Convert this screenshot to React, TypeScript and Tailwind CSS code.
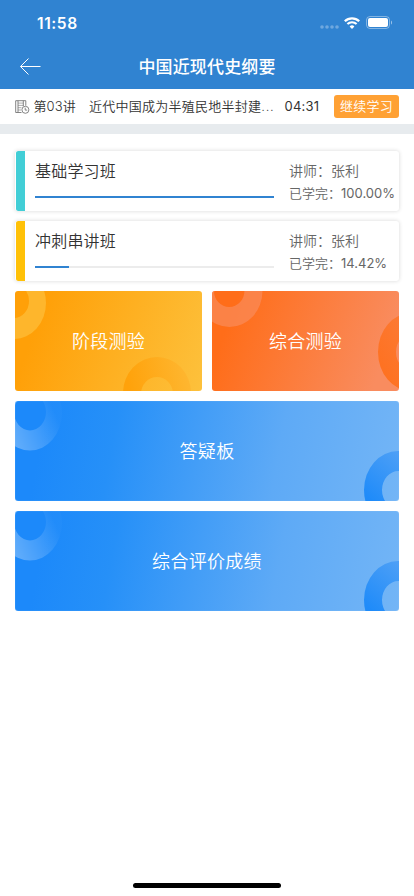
import type { ReactNode } from 'react';

type Course = {
  name: string;
  teacher: string;
  progress: number;
  accent: string;
};

const courses: Course[] = [
  { name: '基础学习班', teacher: '张利', progress: 100, accent: 'bg-[#42ced6]' },
  { name: '冲刺串讲班', teacher: '张利', progress: 14.42, accent: 'bg-[#ffc107]' },
];

function StatusBar() {
  return (
    <div className="flex h-[45px] items-center justify-between pt-[2px] pr-[21px] pl-[37px]">
      <span className="font-['Inter'] text-[15.5px] font-semibold tracking-[0.6px]">
        11:58
      </span>
      <div className="flex items-center">
        <svg width="19" height="4" viewBox="0 0 19 4" className="mt-[7px]" fill="#fff" opacity="0.3">
          <circle cx="2" cy="2" r="1.8" />
          <circle cx="7" cy="2" r="1.8" />
          <circle cx="12" cy="2" r="1.8" />
          <circle cx="17" cy="2" r="1.8" />
        </svg>
        <svg width="16" height="12" viewBox="0 0 16 12" className="-mt-[2px] ml-[5px]" fill="none" stroke="#fff">
          <path d="M.8 4.3a10.2 10.2 0 0 1 14.4 0" strokeWidth="2.3" />
          <path d="M3.4 7.1a6.5 6.5 0 0 1 9.2 0" strokeWidth="2.1" />
          <path d="M5.6 9.4a3.4 3.4 0 0 1 4.8 0L8 11.9z" fill="#fff" stroke="none" />
        </svg>
        <svg width="27" height="13" viewBox="0 0 27 13" className="-mt-[2px] ml-[6px]">
          <rect x=".5" y=".5" width="23" height="12" rx="3.5" fill="none" stroke="#fff" strokeOpacity="0.4" />
          <rect x="2" y="2" width="20" height="9" rx="2" fill="#fff" />
          <path d="M25 4.4c1.4.6 1.4 3.6 0 4.2z" fill="#fff" fillOpacity="0.5" />
        </svg>
      </div>
    </div>
  );
}

function Header() {
  return (
    <header className="h-[89px] bg-[#3083d1] text-white">
      <StatusBar />
      <div className="grid h-11 grid-cols-[1fr_auto_1fr] items-center">
        <svg
          width="22"
          height="18"
          viewBox="0 0 22 18"
          className="ml-[19px]"
          fill="none"
          stroke="currentColor"
          strokeWidth="1"
        >
          <path d="M9.5.5l-8 8 8 8M1.5 8.5h20" />
        </svg>
        <h1 className="text-[17px] leading-6 font-medium tracking-[0.15px]">中国近现代史纲要</h1>
      </div>
    </header>
  );
}

function LessonIcon() {
  return (
    <svg width="15" height="14" viewBox="0 0 15 14" fill="none" stroke="#777" strokeWidth="0.9">
      <path d="M6.5 12.5H.7V.7h10.1v5" />
      <path d="M3 .7v11.8M8.3 .7v5.6" />
      <path d="M3 3.1h5.3M3 5.4h5.3M3 7.7h3.5M3 10h3" strokeWidth="0.6" />
      <circle cx="10.4" cy="9.8" r="3.5" fill="#fff" />
      <path d="M10.2 7.7v2.4h2" />
    </svg>
  );
}

function LessonBar() {
  return (
    <div className="flex h-[45px] items-center border-b-10 border-[#e7ebee] px-[15px] text-[13px] text-[#333]">
      <LessonIcon />
      <span className="ml-[3.5px] w-[55.5px] tracking-[0.1px]">第03讲</span>
      <span className="w-[195.5px] tracking-[0.25px] whitespace-nowrap">
        近代中国成为半殖民地半封建<span className="font-['Inter'] tracking-[0.7px]">...</span>
      </span>
      <span className="font-['Inter'] text-[13px] font-normal tracking-[0.2px]">04:31</span>
      <button className="ml-auto h-[23px] w-[65px] rounded-[3px] bg-[#ffa134] tracking-[0.2px] text-white">
        继续学习
      </button>
    </div>
  );
}

function CourseCard({ course }: { course: Course }) {
  return (
    <div className="flex h-[60px] overflow-hidden rounded-[3px] bg-white shadow-[0_0_4px_rgba(0,0,0,0.16)]">
      <div className={`ml-px w-[9px] rounded-l-[2px] ${course.accent}`} />
      <div className="ml-[10px] w-[239px]">
        <h2 className="mt-[8px] text-[16px] leading-6 tracking-[0.2px] text-[#333]">{course.name}</h2>
        <div className="mt-[13px] h-[2px] bg-[#ececec]">
          <div className="h-full bg-[#3083d1]" style={{ width: `${course.progress}%` }} />
        </div>
      </div>
      <div className="ml-[15px] whitespace-nowrap text-[#666]">
        <p className="mt-[9px] text-[14px] leading-[22px]">讲师：{course.teacher}</p>
        <p className="text-[13px] leading-[22px]">
          已学完：
          <span className="font-['Inter'] font-normal">{course.progress.toFixed(2)}%</span>
        </p>
      </div>
    </div>
  );
}

type TileProps = {
  label: string;
  className: string;
  children: ReactNode;
};

function Tile({ label, className, children }: TileProps) {
  return (
    <button
      className={`relative flex h-[100px] items-center justify-center overflow-hidden rounded-[3px] text-[18px] tracking-[0.3px] text-white ${className}`}
    >
      <svg className="absolute inset-0 h-full w-full">{children}</svg>
      <span className="relative">{label}</span>
    </button>
  );
}

function BlueTile({ id, label }: { id: string; label: string }) {
  return (
    <Tile
      label={label}
      className="bg-linear-[100deg,#1c89fa_8%,#2690f8_26%,#5eaaf6_68%,#73b5f6_100%] shadow-[inset_0_0_1px_rgba(180,220,255,0.8)]"
    >
      <defs>
        <linearGradient id={`${id}-light`} gradientUnits="userSpaceOnUse" x1="0" y1="40" x2="44" y2="22">
          <stop offset="0" stopColor="#fff" stopOpacity="0.3" />
          <stop offset="0.5" stopColor="#fff" stopOpacity="0.17" />
          <stop offset="1" stopColor="#fff" stopOpacity="0.02" />
        </linearGradient>
        <linearGradient id={`${id}-dark`} gradientUnits="userSpaceOnUse" x1="350" y1="94" x2="384" y2="54">
          <stop offset="0" stopColor="#1f8bf9" />
          <stop offset="1" stopColor="#4c9ff6" />
        </linearGradient>
      </defs>
      <path
        fill={`url(#${id}-light)`}
        fillRule="evenodd"
        d="M-17 12a32 37.5 0 1 0 64 0a32 37.5 0 1 0-64 0zM-1 11a16 18.5 0 1 0 32 0a16 18.5 0 1 0-32 0z"
      />
      <path
        fill={`url(#${id}-dark)`}
        fillRule="evenodd"
        d="M349 89a34 39 0 1 0 68 0a34 39 0 1 0-68 0zM367 89a16.5 19 0 1 0 33 0a16.5 19 0 1 0-33 0z"
      />
    </Tile>
  );
}

export default function App() {
  return (
    <div className="flex h-[896px] w-[414px] flex-col overflow-hidden bg-white font-['Inter','Noto_Sans_CJK_SC',sans-serif] [font-weight:350]">
      <Header />
      <LessonBar />

      <main className="flex flex-1 flex-col gap-[10px] px-[15px] pt-[17px]">
        {courses.map((course) => (
          <CourseCard key={course.name} course={course} />
        ))}

        <div className="grid grid-cols-2 gap-[10px]">
          <Tile label="阶段测验" className="bg-linear-[110deg,#ffa008_15%,#fdc13c_100%]">
            <defs>
              <linearGradient id="stage-dark" x1="0" y1="0.5" x2="1" y2="0.3">
                <stop offset="0.1" stopColor="#ffa20b" />
                <stop offset="1" stopColor="#feb731" />
              </linearGradient>
            </defs>
            <path
              fill="#fdbf3c"
              fillOpacity="0.7"
              fillRule="evenodd"
              d="M-33 12a32 36 0 1 0 64 0a32 36 0 1 0-64 0zM-16 10a15 17 0 1 0 30 0a15 17 0 1 0-30 0z"
            />
            <path
              fill="url(#stage-dark)"
              fillRule="evenodd"
              d="M108 102a34 36 0 1 0 68 0a34 36 0 1 0-68 0zM126 103a16 17 0 1 0 32 0a16 17 0 1 0-32 0z"
            />
          </Tile>

          <Tile label="综合测验" className="bg-linear-[110deg,#ff6d19_12%,#f98c5f_88%]">
            <defs>
              <linearGradient id="final-dark" x1="0" y1="0.6" x2="0.6" y2="0.2">
                <stop offset="0" stopColor="#fe7222" />
                <stop offset="1" stopColor="#fc7b37" />
              </linearGradient>
            </defs>
            <path
              fill="#f98d60"
              fillOpacity="0.65"
              fillRule="evenodd"
              d="M-15.5 0a33 36 0 1 0 66 0a33 36 0 1 0-66 0zM2 0a15.2 16 0 1 0 30.4 0a15.2 16 0 1 0-30.4 0z"
            />
            <path
              fill="url(#final-dark)"
              fillRule="evenodd"
              d="M166 61a33 39 0 1 0 66 0a33 39 0 1 0-66 0zM184 61a15 18 0 1 0 30 0a15 18 0 1 0-30 0z"
            />
          </Tile>
        </div>

        <BlueTile id="qa" label="答疑板" />
        <BlueTile id="score" label="综合评价成绩" />
      </main>

      <div className="mx-auto mb-[8px] h-[5px] w-[148px] rounded-full bg-black" />
    </div>
  );
}
